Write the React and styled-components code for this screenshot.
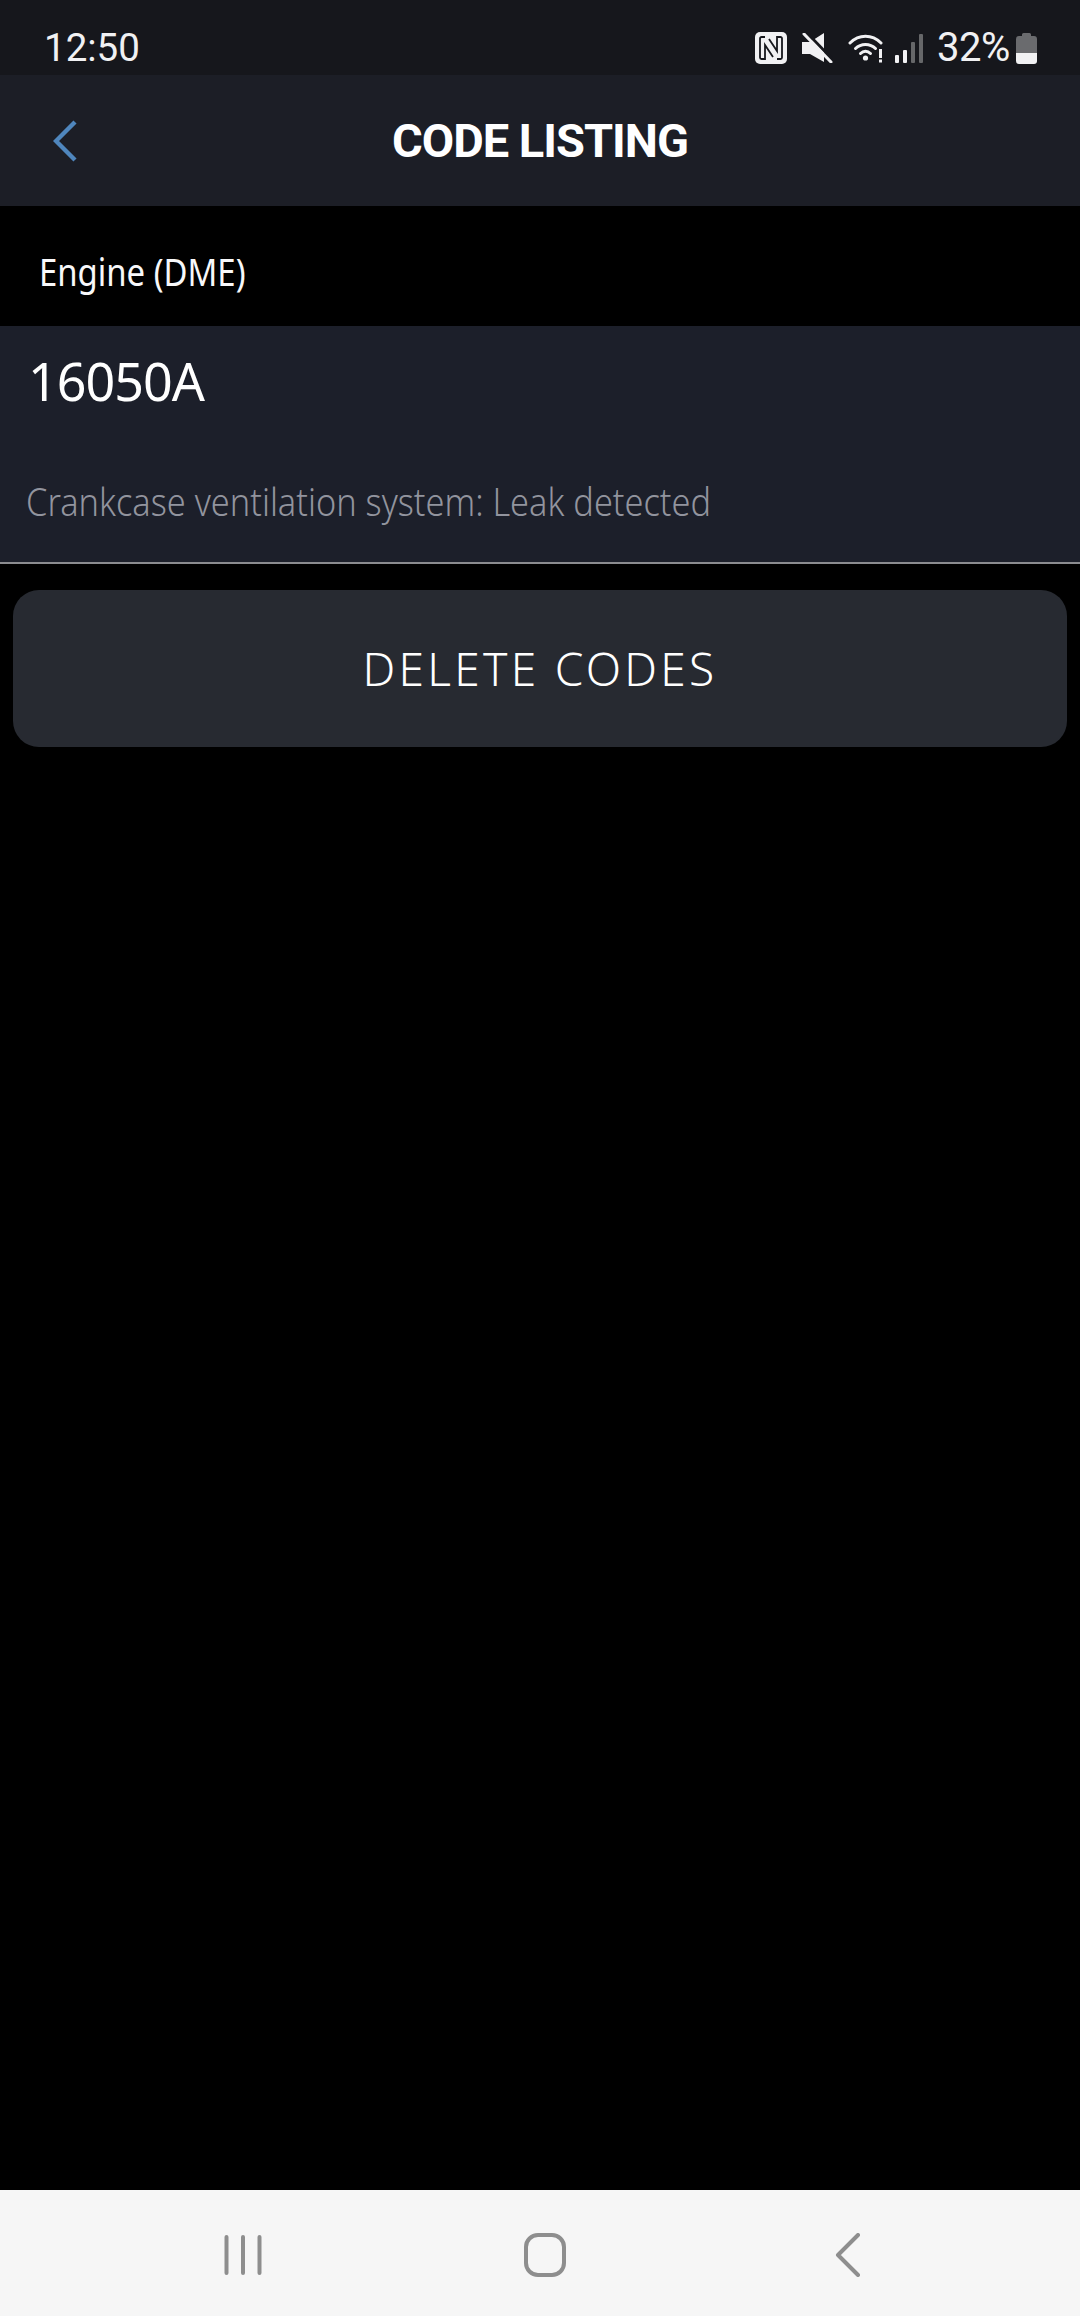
import React from "react";
import styled, { createGlobalStyle } from "styled-components";

const Global = createGlobalStyle`
  html, body { margin: 0; padding: 0; background: #000; }
  * { box-sizing: border-box; }
`;
const Screen = styled.div`
  width: 1080px; height: 2316px; display: flex; flex-direction: column; background: #000; overflow: hidden;
`;
const StatusBar = styled.div`
  height: 75px; flex: none; background: #16171c; display: flex; align-items: center; justify-content: space-between;
  padding: 20px 43px 0 44px; color: #f1f1f3; font-family: Roboto, sans-serif; font-size: 38.5px;
`;
const Time = styled.span`line-height: 1; margin-top: 1px;`;
const StatusIcons = styled.div`display: flex; align-items: center;`;
const Percent = styled.span`line-height: 1; margin: 0 6px 0 14px; font-size: 40px; letter-spacing: -0.4px;`;
const Icon = styled.svg`display: block; flex: none; margin-left: ${p => p.$gap || 0}px;`;
const Header = styled.header`
  height: 131px; flex: none; background: #1c1e26; display: grid; grid-template-columns: 200px 1fr 200px; align-items: center;
`;
const BackButton = styled.div`padding-left: 53px; display: flex;`;
const Title = styled.h1`
  margin: 0; text-align: center; color: #fff; font: 700 47px Roboto, sans-serif; letter-spacing: -1px;
`;
const Section = styled.div`
  height: 120px; flex: none; padding: 10px 0 0 39px; display: flex; align-items: center; color: #f8f8fa;
`;
const SectionLabel = styled.span`
  font: 400 38px "Noto Sans", sans-serif; transform: scaleX(0.865); transform-origin: left center;
`;
const CodeRow = styled.div`
  height: 238px; flex: none; background: #1c1f2a; border-bottom: 2px solid #8b8c90; display: flex; flex-direction: column;
`;
const Code = styled.div`
  margin: 25px 0 0 28px; color: #fff; font: 400 52px/60px "Noto Sans", sans-serif; letter-spacing: -1px;
`;
const Description = styled.div`
  margin: 65px 0 0 26px; color: #92949e; font: 300 39px/50px "Noto Sans", sans-serif; white-space: nowrap;
  transform: scaleX(0.88); transform-origin: left center;
`;
const Action = styled.button`
  flex: none; height: 157px; margin: 26px 13px 0; border: 0; border-radius: 26px; background: #272a31; color: #fff;
  font: 300 46px "Noto Sans", sans-serif; letter-spacing: 3.3px; display: flex; align-items: center; justify-content: center;
  padding-bottom: 2px;
`;
const Spacer = styled.div`flex: 1;`;
const NavBar = styled.nav`
  height: 126px; flex: none; background: #f6f6f6; display: flex; align-items: center; padding: 4px 0 0 224px;
`;
const NavGlyph = styled.svg`display: block; flex: none; margin-left: ${p => p.$gap || 0}px;`;

const NfcIcon = () => (
  <Icon width="32" height="32" viewBox="0 0 32 32">
    <rect width="32" height="32" rx="5" fill="#f1f1f3" />
    <g fill="none" stroke="#16171c" strokeWidth="1.800">
      <path d="M10 5H6.500A1.500 1.500 0 0 0 5 6.500v19A1.500 1.500 0 0 0 6.500 27H10V13l8 12" />
      <path d="M22 27h3.500a1.500 1.500 0 0 0 1.500-1.500v-19A1.500 1.500 0 0 0 25.500 5H22v14L14 7" />
    </g>
  </Icon>
);
const MuteIcon = () => (
  <Icon width="31" height="30" viewBox="0 0 31 30" $gap={15}>
    <path d="M0 9h8L22 0v29L8 21H0z" fill="#f1f1f3" />
    <path d="M5 0L33 29" stroke="#16171c" strokeWidth="3" />
    <path d="M2 1l27 28" stroke="#f1f1f3" strokeWidth="3" strokeLinecap="round" />
  </Icon>
);
const WifiIcon = () => (
  <Icon width="37" height="31" viewBox="0 0 37 31" $gap={15}>
    <g fill="none" stroke="#f1f1f3" strokeWidth="3" strokeLinecap="round">
      <path d="M2 11C11 2 24 2 33 11" />
      <path d="M7.500 16.500C13 11 22 11 27.500 16.500" />
      <path d="M12.500 21.500C15.500 18.500 19.500 18.500 22.500 21.500" />
    </g>
    <circle cx="17.500" cy="26" r="2.600" fill="#f1f1f3" />
    <rect x="31" y="17" width="3" height="9" fill="#f1f1f3" />
    <rect x="31" y="27.500" width="3" height="3" fill="#f1f1f3" />
  </Icon>
);
const SignalIcon = () => (
  <Icon width="28" height="30" viewBox="0 0 28 30" $gap={10}>
    <rect x="0" y="22" width="4" height="8" rx="1" fill="#f1f1f3" />
    <rect x="8" y="17" width="4" height="13" rx="1" fill="#f1f1f3" />
    <rect x="16" y="9" width="4" height="21" rx="1" fill="#666769" />
    <rect x="24" y="1" width="4" height="29" rx="1" fill="#666769" />
  </Icon>
);
const BatteryIcon = () => (
  <Icon width="21" height="32" viewBox="0 0 21 32">
    <path d="M6 2.500A1.500 1.500 0 0 1 7.500 1h6A1.500 1.500 0 0 1 15 2.500V4h3a3 3 0 0 1 3 3v14H0V7a3 3 0 0 1 3-3h3z" fill="#6a6b6e" />
    <path d="M0 21h21v8a3 3 0 0 1-3 3H3a3 3 0 0 1-3-3z" fill="#f1f1f3" />
  </Icon>
);

export default function App() {
  return (
    <Screen>
      <Global />
      <StatusBar>
        <Time>12:50</Time>
        <StatusIcons>
          <NfcIcon />
          <MuteIcon />
          <WifiIcon />
          <SignalIcon />
          <Percent>32%</Percent>
          <BatteryIcon />
        </StatusIcons>
      </StatusBar>
      <Header>
        <BackButton>
          <svg width="24" height="42" viewBox="0 0 24 42" fill="none" stroke="#4f86bd" strokeWidth="4.400">
            <path d="M22 2L3 21l19 19" />
          </svg>
        </BackButton>
        <Title>CODE LISTING</Title>
      </Header>
      <Section><SectionLabel>Engine (DME)</SectionLabel></Section>
      <CodeRow>
        <Code>16050A</Code>
        <Description>Crankcase ventilation system: Leak detected</Description>
      </CodeRow>
      <Action>DELETE CODES</Action>
      <Spacer />
      <NavBar>
        <NavGlyph width="38" height="42" viewBox="0 0 38 42" stroke="#8e8e8e" strokeWidth="4" strokeLinecap="round">
          <path d="M2.500 3v36M19 3v36M35.500 3v36" />
        </NavGlyph>
        <NavGlyph width="42" height="44" viewBox="0 0 42 44" fill="none" stroke="#8e8e8e" strokeWidth="4" $gap={262}>
          <rect x="2" y="2" width="38" height="40" rx="12" />
        </NavGlyph>
        <NavGlyph width="26" height="44" viewBox="0 0 26 44" fill="none" stroke="#8e8e8e" strokeWidth="4" strokeLinecap="round" strokeLinejoin="round" $gap={269}>
          <path d="M23 2L3 22l20 20" />
        </NavGlyph>
      </NavBar>
    </Screen>
  );
}
